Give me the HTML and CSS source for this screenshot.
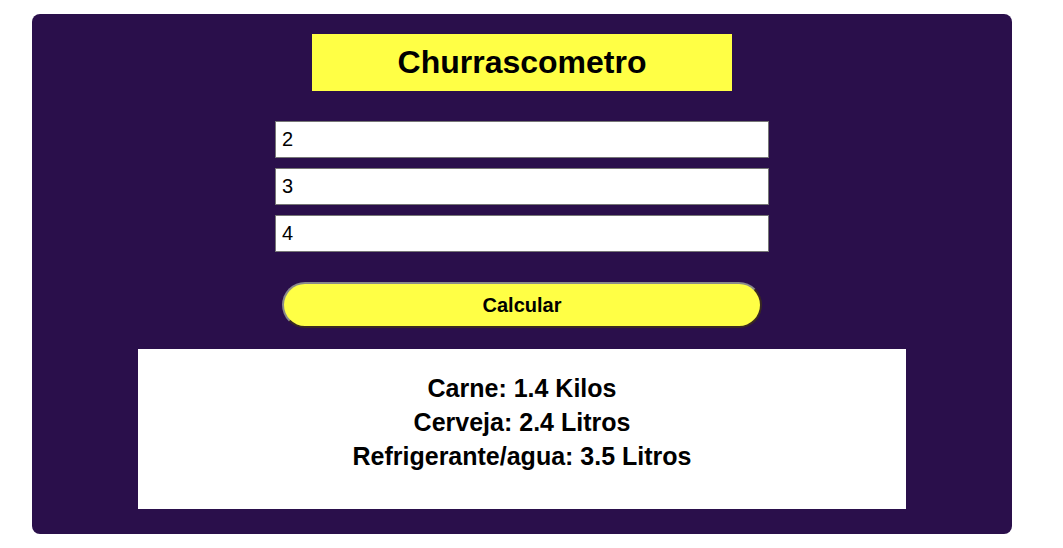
FILE: index.html
```html
<!DOCTYPE html>
<html lang="pt-BR">
<head>
<meta charset="utf-8">
<title>Churrascometro</title>
<link rel="stylesheet" href="styles.css">
</head>
<body>
<main class="app">
  <h1 class="title">Churrascometro</h1>
  <div class="fields">
    <input class="field" type="text" value="2">
    <input class="field" type="text" value="3">
    <input class="field" type="text" value="4">
  </div>
  <button class="calc" type="button">Calcular</button>
  <section class="result">
    <p class="line">Carne: 1.4 Kilos</p>
    <p class="line">Cerveja: 2.4 Litros</p>
    <p class="line">Refrigerante/agua: 3.5 Litros</p>
  </section>
</main>
</body>
</html>
```
FILE: styles.css
```css
html, body {
  margin: 0;
  padding: 0;
  background: #ffffff;
}
body {
  padding: 14px 0 0 32px;
  font-family: "Liberation Sans", Arial, sans-serif;
}
.app {
  box-sizing: border-box;
  width: 980px;
  height: 520px;
  background: #2a0f4b;
  border-radius: 8px;
  padding: 20px 0 25px;
  display: flex;
  flex-direction: column;
  align-items: center;
}
.title {
  box-sizing: border-box;
  width: 420px;
  height: 57px;
  margin: 0;
  background: #ffff45;
  color: #000;
  font-size: 32px;
  font-weight: bold;
  line-height: 57px;
  text-align: center;
}
.fields {
  margin-top: 30px;
  display: flex;
  flex-direction: column;
  gap: 10px;
}
.field {
  box-sizing: border-box;
  width: 494px;
  height: 37px;
  margin: 0;
  padding: 0 6px;
  border: 1px solid #767676;
  background: #fff;
  color: #000;
  font-family: "Liberation Sans", Arial, sans-serif;
  font-size: 20px;
}
.calc {
  box-sizing: border-box;
  width: 480px;
  height: 46px;
  margin-top: 30px;
  background: #ffff45;
  border-style: solid;
  border-width: 2px;
  border-color: #8a8a8a #3a2a20 #3a2a20 #8a8a8a;
  border-radius: 23px;
  color: #000;
  font-family: "Liberation Sans", Arial, sans-serif;
  font-size: 20px;
  font-weight: bold;
  padding: 0;
}
.result {
  box-sizing: border-box;
  width: 768px;
  height: 160px;
  margin-top: 21px;
  background: #fff;
  padding-top: 22px;
  text-align: center;
}
.line {
  margin: 0;
  font-size: 25px;
  line-height: 34px;
  font-weight: bold;
  color: #000;
}
```
